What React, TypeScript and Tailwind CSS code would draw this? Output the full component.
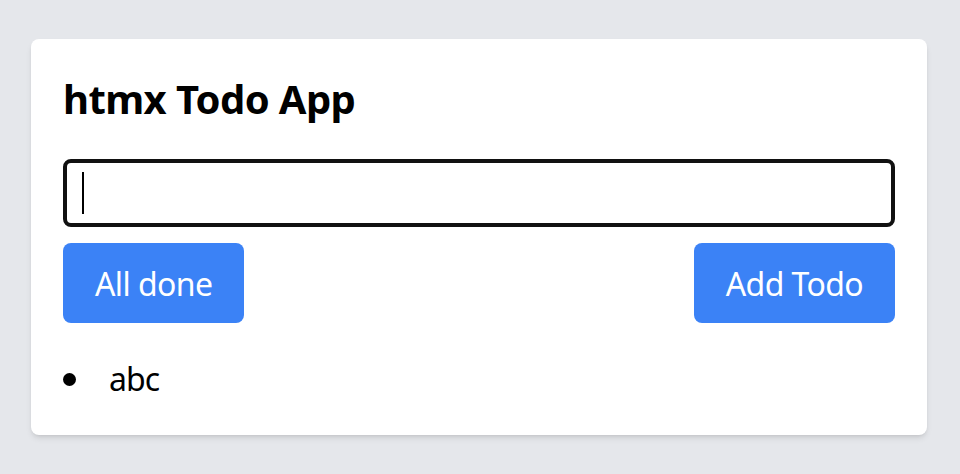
export default function App() {
  return (
    <div
      className="min-h-screen bg-[#e5e7eb] pt-[39px] pl-[31px]"
      style={{ fontFamily: '"Noto Sans", "Open Sans", sans-serif' }}
    >
      <div className="w-[896px] rounded-lg bg-white p-8 shadow-md">
        <h1 className="mb-8 text-[40px] font-bold leading-[56px] tracking-[-0.6px] text-black">htmx Todo App</h1>

        <div className="relative">
          <input
            type="text"
            className="block h-[68px] w-full rounded-lg border-4 border-[#111111] bg-white px-4 text-[32px] leading-[48px] text-black outline-none"
          />
          {/* caret */}
          <div className="pointer-events-none absolute left-[19px] top-[13px] h-[42px] w-[2px] bg-black" />
        </div>

        <div className="mt-4 flex items-center justify-between">
          <button className="rounded-lg bg-[#3b82f6] px-8 pt-[17px] pb-[15px] text-[32px] leading-[48px] tracking-[-0.6px] text-white">
            All done
          </button>
          <button className="rounded-lg bg-[#3b82f6] px-8 pt-[17px] pb-[15px] text-[32px] leading-[48px] tracking-[-0.6px] text-white">
            Add Todo
          </button>
        </div>

        <ul className="mt-8">
          <li className="flex items-center text-[32px] leading-[48px] text-black">
            <span className="h-[13px] w-[13px] rounded-full bg-black" />
            <span className="ml-[33px] tracking-[-1px]">abc</span>
          </li>
        </ul>
      </div>
    </div>
  );
}
